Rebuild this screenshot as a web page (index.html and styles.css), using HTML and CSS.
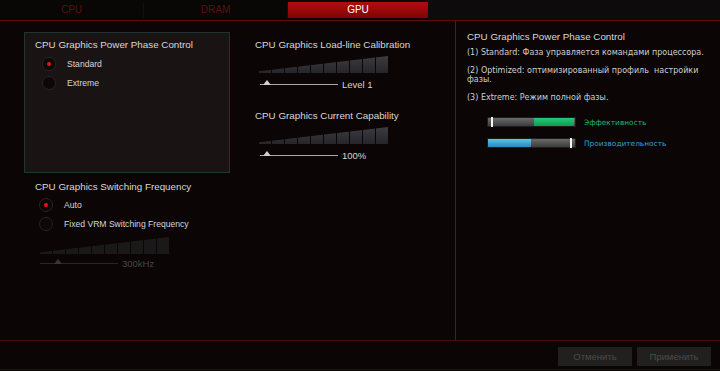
FILE: index.html
```html
<!DOCTYPE html>
<html lang="ru">
<head>
  <meta charset="UTF-8" />
  <title>GPU</title>
  <link rel="stylesheet" href="styles.css">
</head>
<body>
  <div class="tabs">
    <div class="tab">CPU</div>
    <div class="tab">DRAM</div>
    <div class="tab active">GPU</div>
    <div class="tab-rest"></div>
  </div>

  <div class="main">
    <div class="col-left">
      <div class="group-box">
        <div class="title">CPU Graphics Power Phase Control</div>
        <div class="radio-row">
          <span class="radio on"></span><span class="label">Standard</span>
        </div>
        <div class="radio-row">
          <span class="radio"></span><span class="label">Extreme</span>
        </div>
      </div>

      <div class="group-free">
        <div class="title">CPU Graphics Switching Frequency</div>
        <div class="radio-row small">
          <span class="radio on"></span><span class="label">Auto</span>
        </div>
        <div class="radio-row small">
          <span class="radio"></span><span class="label">Fixed VRM Switching Frequency</span>
        </div>
        <div class="slider disabled">
          <div class="steps">
            <i></i><i></i><i></i><i></i><i></i><i></i><i></i><i></i><i></i><i></i>
          </div>
          <div class="track"><span class="line"><b></b></span><span class="value">300kHz</span></div>
        </div>
      </div>
    </div>

    <div class="col-mid">
      <div class="title">CPU Graphics Load-line Calibration</div>
      <div class="slider">
        <div class="steps">
          <i></i><i></i><i></i><i></i><i></i><i></i><i></i><i></i><i></i><i></i>
        </div>
        <div class="track"><span class="line"><b></b></span><span class="value">Level 1</span></div>
      </div>

      <div class="title second">CPU Graphics Current Capability</div>
      <div class="slider">
        <div class="steps">
          <i></i><i></i><i></i><i></i><i></i><i></i><i></i><i></i><i></i><i></i>
        </div>
        <div class="track"><span class="line"><b></b></span><span class="value">100%</span></div>
      </div>
    </div>

    <div class="col-right">
      <div class="title">CPU Graphics Power Phase Control</div>
      <p class="help">(1) Standard: Фаза управляется командами процессора.</p>
      <p class="help">(2) Optimized: оптимизированный профиль&nbsp; настройки фазы.</p>
      <p class="help">(3) Extreme: Режим полной фазы.</p>

      <div class="meter-row">
        <div class="meter">
          <span class="fill green"></span>
          <span class="knob knob-left"></span>
        </div>
        <span class="meter-label green-text">Эффективность</span>
      </div>
      <div class="meter-row">
        <div class="meter">
          <span class="fill blue"></span>
          <span class="knob knob-right"></span>
        </div>
        <span class="meter-label blue-text">Производительность</span>
      </div>
    </div>
  </div>

  <div class="footer">
    <button class="btn">Отменить</button>
    <button class="btn">Применить</button>
  </div>
</body>
</html>
```

FILE: styles.css
```css
body {
  margin: 0;
  width: 720px;
  height: 371px;
  overflow: hidden;
  background: #0b0505;
  font-family: "Liberation Sans", Arial, sans-serif;
  color: #d6d6d6;
}

/* tabs */
.tabs {
  display: flex;
  height: 20px;
  background: #090606;
  border-bottom: 1px solid #5a0b0b;
}

.tab {
  width: 143px;
  height: 16px;
  margin-top: 2px;
  line-height: 16px;
  text-align: center;
  font-size: 10px;
  color: #5e0f0f;
  border-right: 1px solid #140d0d;
}

.tab.active {
  width: 140px;
  color: #fff;
  background: linear-gradient(#b40c0c, #7e0505);
  border-right: none;
}

.tab-rest {
  flex: 1;
  background: #0d0b0b;
}

/* main area */
.main {
  display: flex;
  height: 319px;
  border-bottom: 1px solid #4e0a0a;
}

.title {
  font-size: 9.8px;
  line-height: 14px;
  color: #d8d8d8;
  white-space: nowrap;
}

.col-left {
  width: 216px;
  padding: 11px 0 0 24px;
}

.group-box {
  width: 194px;
  height: 134px;
  padding: 5px 0 0 10px;
  background: #1a1313;
  border: 1px solid #1f3535;
}

.radio-row {
  display: flex;
  align-items: center;
  height: 19px;
  font-size: 8.6px;
}

.group-box .title {
  margin-bottom: 2px;
}

.radio {
  position: relative;
  width: 12px;
  height: 12px;
  margin: 0 11px 0 7px;
  border-radius: 50%;
  background: #0c0808;
  border: 1px solid #2a2424;
}

.radio.on::after {
  content: "";
  position: absolute;
  left: 4px;
  top: 4px;
  width: 4px;
  height: 4px;
  border-radius: 50%;
  background: #f01010;
}

.group-free {
  padding: 7px 0 0 11px;
}

.group-free .title {
  margin-bottom: 1px;
}

.group-free .radio {
  margin: 0 11px 0 4px;
}

/* step sliders */
.slider {
  width: 160px;
}

.steps {
  display: flex;
  gap: 1px;
  width: 129px;
  height: 17px;
  margin-left: 4px;
  clip-path: polygon(0 90%, 100% 0, 100% 100%, 0 100%);
}

.steps i {
  flex: 1;
  background: linear-gradient(#3c3c40, #26262a);
}

.track {
  display: flex;
  align-items: center;
  height: 12px;
  margin-top: 5px;
  margin-left: 5px;
  font-size: 9.5px;
  color: #d6d6d6;
}

.line {
  position: relative;
  width: 78px;
  height: 1px;
  background: #a8a8a8;
  margin-right: 4px;
}

.line b {
  position: absolute;
  left: 3px;
  bottom: 0;
  width: 0;
  height: 0;
  border-left: 4px solid transparent;
  border-right: 4px solid transparent;
  border-bottom: 5px solid #d0d0d0;
}

.disabled .steps {
  margin-left: 5px;
  margin-top: 4px;
}

.disabled .steps i {
  background: #1a1818;
}

.disabled .track {
  margin-top: 3px;
  margin-left: 5px;
  color: #4a4444;
}

.disabled .line {
  background: #2a2626;
}

.disabled .line b {
  left: 14px;
  border-bottom-color: #3a3434;
}

.col-mid {
  width: 200px;
  padding: 17px 0 0 15px;
}

.col-mid .title {
  margin-bottom: 4px;
}

.col-mid .title.second {
  margin-top: 19px;
}

/* help panel */
.col-right {
  flex: 1;
  padding: 9px 0 0 11px;
  border-left: 1px solid #2e2a2a;
}

.help {
  margin: 0 0 9px;
  width: 245px;
  font-family: "DejaVu Sans", Verdana, sans-serif;
  font-size: 8px;
  line-height: 9px;
  color: #cfcfcf;
}

.col-right .title {
  margin-bottom: 4px;
}

.meter-row {
  display: flex;
  align-items: center;
  margin: 15px 0 0 20px;
}

.meter-row + .meter-row {
  margin-top: 11px;
}

.meter {
  position: relative;
  width: 87px;
  height: 8px;
  border: 1px solid #1c1c1c;
  background: linear-gradient(#6a6a6a, #3c3c3c);
}

.fill {
  position: absolute;
  top: 0;
  bottom: 0;
}

.fill.green {
  left: 46px;
  right: 1px;
  background: linear-gradient(#26c978, #0f9a52);
}

.fill.blue {
  left: 0;
  width: 43px;
  background: linear-gradient(#5cc4ea, #2889b8);
}

.knob {
  position: absolute;
  top: -1px;
  bottom: -1px;
  width: 2px;
  background: #f4f4f4;
}

.knob-left {
  left: 3px;
}

.knob-right {
  right: 3px;
}

.meter-label {
  margin-left: 8px;
  font-family: "DejaVu Sans", Verdana, sans-serif;
  font-size: 7.4px;
}

.green-text {
  color: #1db572;
}

.blue-text {
  color: #3a9fcc;
}

/* footer */
.footer {
  display: flex;
  justify-content: flex-end;
  gap: 5px;
  height: 29px;
  padding: 6px 9px 0 0;
  box-sizing: border-box;
  border-bottom: 1px solid #3e0808;
}

.btn {
  width: 74px;
  height: 19px;
  border: none;
  background: #221f1f;
  color: #4e4a4a;
  font-family: "Liberation Sans", Arial, sans-serif;
  font-size: 9.5px;
}
```
